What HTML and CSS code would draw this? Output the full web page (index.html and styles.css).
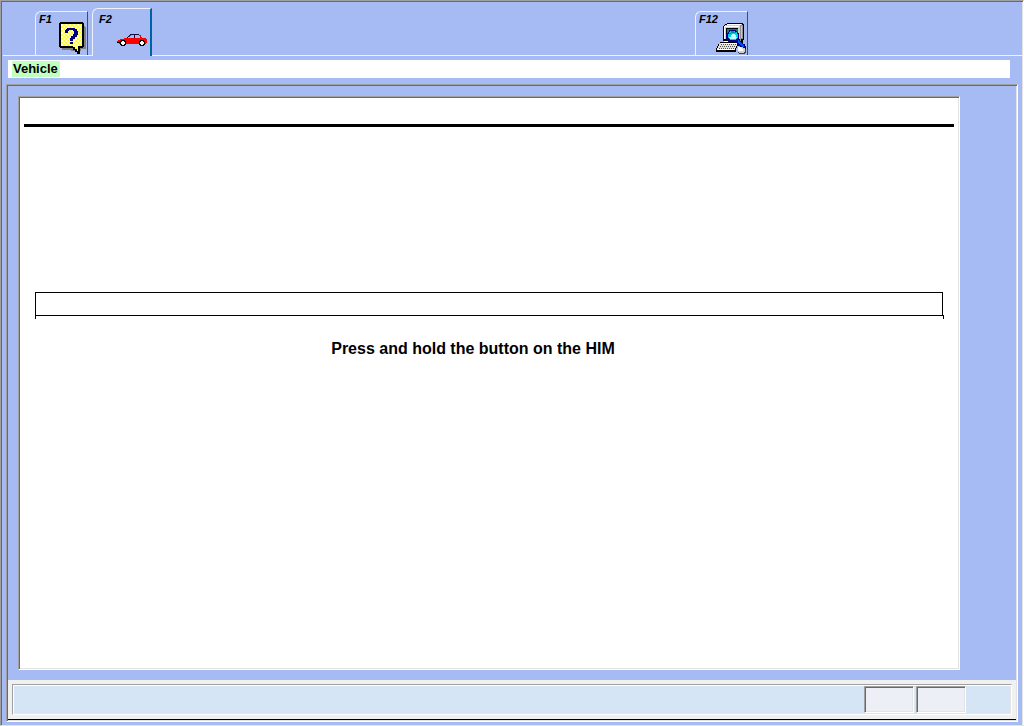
FILE: index.html
```html
<!DOCTYPE html>
<html lang="en">
<head>
<meta charset="utf-8">
<title>Vehicle</title>
<meta name="viewport" content="width=device-width, initial-scale=1">
<link rel="stylesheet" href="styles.css">
</head>
<body>
<div class="app">
  <nav class="tabs" aria-label="Function keys">
    <button class="tab tab-help" type="button" aria-label="F1 Help">
      <span class="key">F1</span>
      <svg class="icon-help" width="28" height="32" viewBox="0 0 28 32" shape-rendering="crispEdges" aria-hidden="true">
        <defs>
          <pattern id="check" width="4" height="4" patternUnits="userSpaceOnUse">
            <path fill="#ffff20" d="M0 0h4v4H0z"/>
            <path fill="#ffffd8" d="M0 0h2v2H0zM2 2h2v2H2z"/>
          </pattern>
        </defs>
        <path fill="#808080" d="M3 4h23v1h1v22h-5v2H12v-1H3z"/>
        <path fill="#000" d="M1 0h23v1h1v24h-1v1h-3v6h-3v-2h-2v-2h-2v-2H1v-1H0V1h1z"/>
        <path fill="url(#check)" d="M2 2h21v22h-4v5h-1v-2h-2v-2h-2v-1H2z"/>
        <path fill="#000080" d="M8 6h8v1h2v2h1v4h-1v2h-2v2h-2v2h-3v-3h1v-2h2v-2h1V9h-1V8h-4v1H9v2H6V8h1V7h1zM11 20h3v2h-3z"/>
      </svg>
    </button>
    <button class="tab tab-vehicle" type="button" aria-label="F2 Vehicle" aria-current="page">
      <span class="key">F2</span>
      <svg class="icon-car" width="30" height="12" viewBox="0 0 30 12" shape-rendering="crispEdges" aria-hidden="true">
        <path fill="#ff0000" d="M13 0h9v1h2v2h1v1h4v1h1v4h-1v1H2V9H0V7h1V6h2V5h4V4h3V3h1V2h1V1h1z"/>
        <path fill="#a6baf3" d="M14 1h3v3h-6V3h2V2h1zM18 1h4v1h1v2h-5z"/>
        <path fill="#101040" d="M13 0h9v1h-9zM12 1h1v1h-1zM11 2h1v1h-1zM10 3h1v1h-1zM17 1h1v3h-1z"/>
        <path fill="#000" d="M4 6h4v1h1v4H8v1H4v-1H3V7h1zM23 6h4v1h1v4h-1v1h-4v-1h-1V7h1z"/>
        <path fill="#fff" d="M5 7h2v1h1v2H7v1H5v-1H4V8h1zM24 7h2v1h1v2h-1v1h-2v-1h-1V8h1z"/>
        <path fill="#000" d="M0 8h3v1H0z"/>
      </svg>
    </button>
    <button class="tab tab-admin" type="button" aria-label="F12 Computer">
      <span class="key">F12</span>
      <svg class="icon-computer" width="32" height="32" viewBox="0 0 32 32" shape-rendering="crispEdges" aria-hidden="true">
        <path fill="#000" d="M11 1h16v1h1v16h-1v6H8v-5H7V4h1V3h1V2h2z"/>
        <path fill="#d4d0c8" d="M11 2h15v1h-2v14H8V4h1V3h2zM8 19h16v4H8z"/>
        <path fill="#fff" d="M11 2h14v1H11zM8 4h15v1H9v12H8zM8 19h16v1H8z"/>
        <path fill="#909090" d="M24 3h3v14h-2v5h-1z"/>
        <path fill="#c8c8c8" d="M25 4h1v12h-1z"/>
        <path fill="#000" d="M10 6h12v9H10z"/>
        <path fill="#008080" d="M11 7h11v8H11z"/>
        <path fill="#000" d="M4 20h19v2h-1v2h-1v2h-1v4H0v-4h1v-2h1v-2h2z"/>
        <path fill="#e4e0d8" d="M4 21h18v1h-1v2h-1v2h-1v2H1v-2h1v-2h1v-2h1z"/>
        <path fill="#fff" d="M5 21h16v1H5zM1 27h18v1H1z"/>
        <path stroke="#505050" stroke-dasharray="1 1" d="M5 22.5h15M4 24.5h15M3 26.5h15"/>
        <path fill="#000080" d="M13 8h7v1h1v1h1v1h1v6h-1v1h2v1h1v1h1v1h1v1h2v2h1v3h-3v-1h-2v-1h-1v-1h-1v-1h-1v-1h-1v-1h-2v-1h-7v-1h-1v-1h-1v-6h1v-1h1v-1h1z"/>
        <path fill="#00d0e0" d="M14 9h5v1h2v2h1v4h-1v1h-1v1h-6v-1h-1v-1h-1v-4h1v-2h1z"/>
        <path fill="#b8ffff" d="M13 15h2v-2h1v-1h3v1h1v2h1v1h-1v1h-6v-1h-1z"/>
        <path fill="#008fa8" d="M15 9h3v1h2v1h-5v1h-2v-1h2z"/>
        <path fill="#0050e8" d="M22 18h1v1h1v1h1v1h1v1h1v1h1v2h-2v-1h-1v-1h-1v-1h-1v-1h-1z"/>
        <path fill="#404040" d="M22 26h7v1h1v4h-1v1h-6v-1h-1z"/>
        <path fill="#d4d0c8" d="M22 25h5v1h2v4h-1v1h-5v-1h-1z"/>
        <path fill="#fff" d="M22 25h3v1h1v1h1v2h-5z"/>
      </svg>
    </button>
  </nav>

  <header class="title-bar"><h1 class="title">Vehicle</h1></header>

  <div class="frame">
    <main class="workspace">
      <section class="panel">
        <div class="rule"></div>
        <div class="field"></div>
        <p class="message">Press and hold the button on the HIM</p>
      </section>
    </main>
    <footer class="status">
      <div class="status-bar">
        <div class="status-cell"></div>
        <div class="status-cell"></div>
      </div>
    </footer>
  </div>
</div>
</body>
</html>
```

FILE: styles.css
```css
:root {
  --blue: #a6baf3;
  --shade: #a0a0a0;
  --dark: #696969;
  --light: #e3e3e3;
  --edge: #0060a8;
}

* {
  box-sizing: border-box;
}

body {
  margin: 0;
  font-family: "Liberation Sans", Arial, sans-serif;
  color: #000;
}

.app {
  display: flex;
  flex-direction: column;
  min-height: 100vh;
  padding: 1px 1px 3px;
  background: var(--blue);
  border: 1px solid var(--shade);
  border-right-color: #fff;
  border-bottom-color: var(--light);
  box-shadow: inset 1px 1px var(--dark), inset -1px 0 var(--light);
}

/* Function key tabs, one 60px slot for each key */
.tabs {
  display: grid;
  grid-template-columns: repeat(12, 60px);
  align-items: end;
  height: 54px;
  margin-left: 1px;
  padding-left: 32px;
  border-bottom: 1px solid #eef2ff;
}

.tab {
  display: flex;
  position: relative;
  width: 53px;
  height: 44px;
  margin: 0;
  padding: 1px 0 0 3px;
  background: var(--blue);
  border: 1px solid #eef2ff;
  border-right-color: var(--edge);
  border-bottom: 0;
  border-top-left-radius: 6px;
  font: italic bold 11px/12px "Liberation Sans", Arial, sans-serif;
  color: #000;
}

.tab-vehicle {
  width: 60px;
  height: 48px;
  margin: 0 0 -1px -3px;
  padding: 4px 0 0 6px;
  border-right-width: 2px;
}

.tab-admin {
  grid-column: 12;
}

.key {
  align-self: flex-start;
}

.tab svg {
  position: absolute;
}

.icon-help {
  right: 0;
  bottom: 1px;
}

.icon-car {
  right: 3px;
  bottom: 10px;
}

.icon-computer {
  right: -1px;
  bottom: 1px;
}

.title-bar {
  margin: 4px 12px 6px 6px;
  padding: 1px 4px;
  background: #fff;
}

.title {
  width: fit-content;
  margin: 0;
  padding: 0 2px 0 1px;
  background: #c0ffc0;
  font-size: 13px;
  line-height: 16px;
}

.frame {
  display: flex;
  flex: 1;
  flex-direction: column;
  margin: 0 4px;
  padding: 1px;
  border: 1px solid var(--shade);
  border-right-color: #fff;
  border-bottom-color: #fff;
  box-shadow: inset 1px 1px var(--dark), inset -1px -1px var(--light);
}

.workspace {
  display: flex;
  flex: 1;
  padding: 10px 56px 10px 10px;
}

.panel {
  flex: 1;
  padding: 27px 5px 0;
  background: #fff;
  border: 1px solid var(--shade);
  border-right-color: #fff;
  border-bottom-color: #fff;
  box-shadow: inset 1px 1px var(--dark), inset -1px -1px var(--light);
}

.rule {
  height: 3px;
  background: #000;
}

.field {
  position: relative;
  height: 24px;
  margin: 165px 11px 0;
  border: 1px solid #000;
}

/* Short ticks below the two lower corners */
.field::before,
.field::after {
  content: "";
  position: absolute;
  top: 100%;
  left: -1px;
  height: 4px;
  border-left: 1px solid #000;
}

.field::after {
  right: -2px;
  left: auto;
}

.message {
  margin: 23px 32px 0 0;
  font-size: 16px;
  font-weight: bold;
  line-height: 20px;
  text-align: center;
}

.status {
  padding: 4px;
  background: #f0f0f0;
  border-bottom: 1px solid #000;
}

.status-bar {
  display: flex;
  justify-content: flex-end;
  gap: 2px;
  height: 31px;
  padding: 1px 45px 0 1px;
  background: #d5e5f5;
  border: 1px solid var(--shade);
  border-right-color: #fff;
  border-bottom-color: #fff;
  box-shadow: inset 1px 1px #fff, inset -1px -1px var(--light);
}

.status-cell {
  width: 50px;
  height: 27px;
  background: #eceff6;
  border: 1px solid var(--shade);
  border-right-color: #fff;
  border-bottom-color: #fff;
  box-shadow: inset 1px 1px var(--dark), inset -1px -1px var(--light);
}
```
